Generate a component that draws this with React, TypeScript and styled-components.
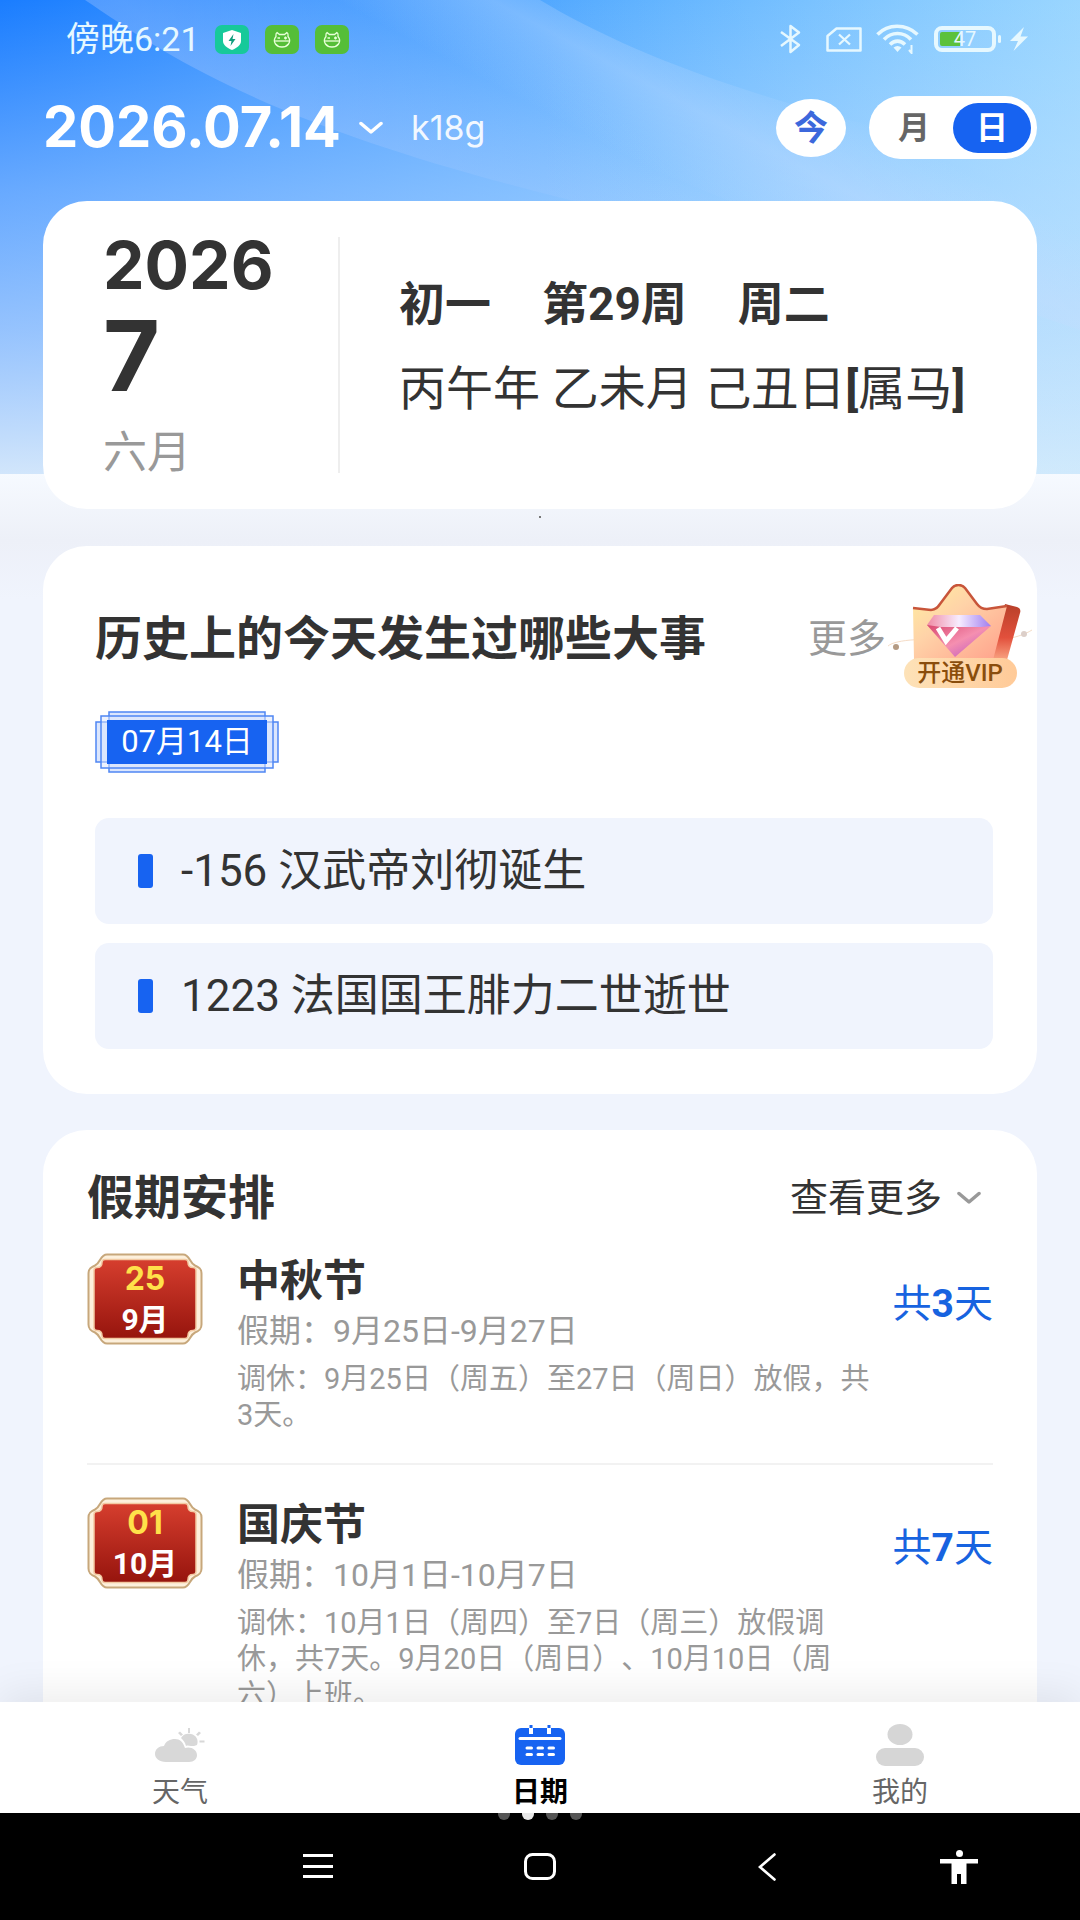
import { useState } from 'react'
import styled, { createGlobalStyle } from 'styled-components'

const EVENTS = ['-156 汉武帝刘彻诞生', '1223 法国国王腓力二世逝世']

const HOLIDAYS = [
  {
    day: '25',
    month: '9月',
    name: '中秋节',
    range: '假期：9月25日-9月27日',
    note: '调休：9月25日（周五）至27日（周日）放假，共3天。',
    total: 3,
  },
  {
    day: '01',
    month: '10月',
    name: '国庆节',
    range: '假期：10月1日-10月7日',
    note: '调休：10月1日（周四）至7日（周三）放假调休，共7天。9月20日（周日）、10月10日（周六）上班。',
    total: 7,
  },
]

const TABS = [
  { id: 'weather', label: '天气', Icon: WeatherIcon },
  { id: 'date', label: '日期', Icon: CalendarIcon },
  { id: 'mine', label: '我的', Icon: UserIcon },
]

export default function App() {
  const [mode, setMode] = useState('day')
  const [tab, setTab] = useState('date')

  return (
    <>
      <GlobalStyle />
      <Screen>
        <Content>
          <Sky />
          <StatusBar />
          <TopBar>
            <DateButton type="button">
              2026.07.14
              <Chevron color="#ffffff" />
            </DateButton>
            <Channel>k18g</Channel>
            <TodayButton type="button">今</TodayButton>
            <Segment>
              <SegmentButton
                type="button"
                $active={mode === 'month'}
                onClick={() => setMode('month')}
              >
                月
              </SegmentButton>
              <SegmentButton
                type="button"
                $active={mode === 'day'}
                onClick={() => setMode('day')}
              >
                日
              </SegmentButton>
            </Segment>
          </TopBar>

          <DayCard>
            <DayLeft>
              <Year>2026</Year>
              <Month>7</Month>
              <LunarMonth>六月</LunarMonth>
            </DayLeft>
            <DayRight>
              <DaySummary>
                <span>初一</span>
                <span>第29周</span>
                <span>周二</span>
              </DaySummary>
              <DayGanzhi>
                丙午年 乙未月 己丑日<b>[</b>属马<b>]</b>
              </DayGanzhi>
            </DayRight>
          </DayCard>
          <PagerDot />

          <HistoryCard>
            <HistoryHeader>
              <Title>历史上的今天发生过哪些大事</Title>
              <MoreLink href="#history">更多</MoreLink>
            </HistoryHeader>
            <VipButton type="button">
              <VipCrown />
              <VipLabel>开通VIP</VipLabel>
            </VipButton>
            <DateTag>
              <DateTagFrame />
              <DateTagText>07月14日</DateTagText>
            </DateTag>
            <EventList>
              {EVENTS.map((event) => (
                <EventItem key={event}>{event}</EventItem>
              ))}
            </EventList>
          </HistoryCard>

          <HolidayCard>
            <HolidayHeader>
              <Title>假期安排</Title>
              <ViewMore type="button">
                查看更多
                <Chevron color="#999999" />
              </ViewMore>
            </HolidayHeader>
            {HOLIDAYS.map((holiday) => (
              <HolidayItem key={holiday.name}>
                <HolidayBadge>
                  <BadgeFrame id={holiday.day} />
                  <BadgeDay>{holiday.day}</BadgeDay>
                  <BadgeMonth>{holiday.month}</BadgeMonth>
                </HolidayBadge>
                <HolidayInfo>
                  <HolidayName>{holiday.name}</HolidayName>
                  <HolidayRange>{holiday.range}</HolidayRange>
                  <HolidayNote>{holiday.note}</HolidayNote>
                </HolidayInfo>
                <HolidayTotal>
                  共<b>{holiday.total}</b>天
                </HolidayTotal>
              </HolidayItem>
            ))}
          </HolidayCard>
        </Content>

        <TabBar>
          {TABS.map(({ id, label, Icon }) => (
            <TabButton
              key={id}
              type="button"
              $active={tab === id}
              onClick={() => setTab(id)}
            >
              <Icon />
              {label}
            </TabButton>
          ))}
        </TabBar>

        <SystemBar>
          <Dots>
            <Dot />
            <Dot $active />
            <Dot />
            <Dot />
          </Dots>
          <SystemButton type="button" aria-label="菜单" $column={2}>
            <svg width="30" height="25" viewBox="0 0 30 25" fill="#fff">
              <path d="M0 0h30v3H0zM0 11h30v3H0zM0 21h30v3H0z" />
            </svg>
          </SystemButton>
          <SystemButton type="button" aria-label="主页" $column={3}>
            <svg width="32" height="27" viewBox="0 0 32 27" fill="none">
              <rect x="1.5" y="1.5" width="29" height="24" rx="7" stroke="#fff" strokeWidth="3" />
            </svg>
          </SystemButton>
          <SystemButton type="button" aria-label="返回" $column={4}>
            <svg width="18" height="28" viewBox="0 0 18 28" fill="none">
              <path d="M16.5 1.5L2 14l14.500 12.500" stroke="#fff" strokeWidth="2.600" strokeLinecap="round" />
            </svg>
          </SystemButton>
          <SystemButton type="button" aria-label="无障碍" $column={5}>
            <svg width="38" height="34" viewBox="0 0 38 34" fill="#fff">
              <circle cx="19.500" cy="3.500" r="3.500" />
              <path d="M0 9h38v4.500H26.500V34h-5.500V24h-4v10h-5.500V13.500H0z" />
            </svg>
          </SystemButton>
        </SystemBar>
      </Screen>
    </>
  )
}

function StatusBar() {
  return (
    <StatusRow>
      <Clock>傍晚6:21</Clock>
      <AppIcons>
        <svg width="34" height="29" viewBox="0 0 34 29">
          <rect width="34" height="29" rx="7" fill="#17c99a" />
          <path d="M17 5l9 3v8c0 4-4 7-9 9-5-2-9-5-9-9V8z" fill="#fff" />
          <path d="M18.500 9l-5 7h3l-1 5 5-7h-3z" fill="#0f9c7c" />
        </svg>
        <CatIcon />
        <CatIcon />
      </AppIcons>
      <SystemIcons>
        <svg width="22" height="30" viewBox="0 0 22 30" fill="none" stroke="#e6f8ff" strokeWidth="2.500">
          <path d="M1 8l18 13-8.500 7V2l8.500 6.500L1 22" strokeLinejoin="round" />
        </svg>
        <svg width="36" height="25" viewBox="0 0 36 25" fill="none" stroke="#e6f8ff">
          <path d="M10.500 1.500h24v22H1.500V9z" strokeWidth="2.500" strokeLinejoin="round" />
          <path d="M13 7.500l11 10M24 7.500l-11 10" strokeWidth="2.300" />
        </svg>
        <svg width="44" height="30" viewBox="0 0 44 30" fill="none" stroke="#e6f8ff" strokeWidth="3.600">
          <path d="M1.500 10.500C12-.5 30-.5 41.500 10.500" />
          <path d="M8 15.500c7.500-8 19.500-8 27 0" />
          <path d="M14 20.500c4.500-4.500 10.500-4.500 15 0" />
          <path d="M17.500 23.500c2.500-2 5.500-2 8 0L21.500 28z" fill="#e6f8ff" stroke="none" />
          <path d="M35.500 21v8l-2.500-3" strokeWidth="2" />
        </svg>
        <Battery>
          <BatteryText>47</BatteryText>
        </Battery>
        <svg width="18" height="24" viewBox="0 0 18 24" fill="#e6f8ff">
          <path d="M14 0L0 14h8L3.500 24 18 9.500h-7.500z" />
        </svg>
      </SystemIcons>
    </StatusRow>
  )
}

function CatIcon() {
  return (
    <svg width="34" height="29" viewBox="0 0 34 29">
      <rect width="34" height="29" rx="7" fill="#55be38" />
      <g fill="none" stroke="#e9ffd9" strokeWidth="1.300">
        <path d="M11 11.500c0-2-.5-3.500 1-4l2.500 2h5l2.500-2c1.500.5 1 2 1 4 2 2.500 2 5.500.5 7.500-3 4-10 4-13 0-1.500-2-1.500-5 .5-7.500z" />
        <path d="M9.500 16h15" />
        <path d="M12.500 13h2.500M19 13h3M20.500 11.500v3" />
      </g>
    </svg>
  )
}

function Sky() {
  return (
    <SkySvg viewBox="0 0 1080 474" preserveAspectRatio="none" aria-hidden="true">
      <defs>
        <linearGradient id="skyBase" x1="0" y1="0" x2="1080" y2="0" gradientUnits="userSpaceOnUse">
          <stop offset="0" stopColor="#1a7dff" />
          <stop offset="0.300" stopColor="#3d97ff" />
          <stop offset="0.600" stopColor="#5cb0ff" />
          <stop offset="1" stopColor="#8acdff" />
        </linearGradient>
        <linearGradient id="skyFade" x1="0" y1="0" x2="0" y2="1">
          <stop offset="0" stopColor="#c5dfff" stopOpacity="0" />
          <stop offset="0.400" stopColor="#c5dfff" stopOpacity="0.450" />
          <stop offset="0.700" stopColor="#cbe1fd" stopOpacity="0.700" />
          <stop offset="1" stopColor="#dbebfb" stopOpacity="0.950" />
        </linearGradient>
        <linearGradient id="skyBeam" x1="260" y1="130" x2="440" y2="-60" gradientUnits="userSpaceOnUse">
          <stop offset="0" stopColor="#b4ceff" stopOpacity="0.320" />
          <stop offset="1" stopColor="#b4ceff" stopOpacity="0" />
        </linearGradient>
        <linearGradient id="skyBeamTwo" x1="670" y1="180" x2="740" y2="50" gradientUnits="userSpaceOnUse">
          <stop offset="0" stopColor="#c4dcff" stopOpacity="0" />
          <stop offset="0.500" stopColor="#c4dcff" stopOpacity="0.350" />
          <stop offset="1" stopColor="#c4dcff" stopOpacity="0" />
        </linearGradient>
        <linearGradient id="skyRight" x1="0" y1="0" x2="1" y2="0">
          <stop offset="0.500" stopColor="#bfeaff" stopOpacity="0" />
          <stop offset="1" stopColor="#bfeaff" stopOpacity="0.300" />
        </linearGradient>
      </defs>
      <rect width="1080" height="474" fill="url(#skyBase)" />
      <rect width="1080" height="474" fill="url(#skyFade)" />
      <rect width="1080" height="474" fill="url(#skyRight)" />
      <path d="M85 0C130 30 160 52 230 86 330 134 450 172 620 212L1080 260V0z" fill="url(#skyBeam)" />
      <path d="M330 0C500 110 700 200 1080 330V170C800 120 640 60 540 0z" fill="url(#skyBeamTwo)" />
    </SkySvg>
  )
}

function Chevron({ color }: { color: string }) {
  return (
    <svg width="24" height="14" viewBox="0 0 24 14" fill="none">
      <path d="M2 2.500l10 8.500L22 2.500" stroke={color} strokeWidth="3.500" strokeLinecap="round" strokeLinejoin="round" />
    </svg>
  )
}

function VipCrown() {
  return (
    <svg width="146" height="78" viewBox="0 0 146 78">
      <defs>
        <linearGradient id="crownFront" x1="0" y1="0" x2="1" y2="1">
          <stop offset="0" stopColor="#fff0a0" />
          <stop offset="0.400" stopColor="#ffd3a8" />
          <stop offset="1" stopColor="#ff9f8a" />
        </linearGradient>
        <linearGradient id="crownSide" x1="0" y1="0" x2="0" y2="1">
          <stop offset="0" stopColor="#b8402a" />
          <stop offset="0.600" stopColor="#e2503c" />
          <stop offset="1" stopColor="#f9a483" />
        </linearGradient>
        <linearGradient id="gem" x1="0" y1="0" x2="1" y2="1">
          <stop offset="0" stopColor="#d9486f" />
          <stop offset="0.500" stopColor="#f58fb0" />
          <stop offset="1" stopColor="#b44ec4" />
        </linearGradient>
        <linearGradient id="gemTop" x1="0" y1="0" x2="1" y2="0">
          <stop offset="0" stopColor="#f08ba4" />
          <stop offset="0.500" stopColor="#f7ecff" />
          <stop offset="1" stopColor="#9f7df0" />
        </linearGradient>
      </defs>
      <path d="M1 62c8-7 40-8 70-5s60-2 74-11" fill="none" stroke="#f5dcc6" strokeWidth="1" />
      <path d="M118 20l12 3c3 1 4 3 3 6l-13 47h-16z" fill="url(#crownSide)" />
      <path d="M26 24l18 2c5 0 7-3 9-6L65 4c3-4 10-4 13 0l12 16c3 4 6 5 10 5l20-3-14 54H27z" fill="url(#crownFront)" />
      <path d="M26 24l18 2c5 0 7-3 9-6L65 4c3-4 10-4 13 0l12 16c3 4 6 5 10 5l20-3" fill="none" stroke="#c8553a" strokeWidth="2.500" />
      <path d="M47 31h46l11 11-10 4H46l-6-5z" fill="url(#gemTop)" />
      <path d="M40 41l14 2h40l10-1-36 31z" fill="url(#gem)" />
      <path d="M51 44l8 13 11-13" fill="none" stroke="#fff" strokeWidth="5" />
      <circle cx="9" cy="63" r="3" fill="#b59b83" />
      <circle cx="137" cy="50" r="3" fill="#dccfc9" />
    </svg>
  )
}

function DateTagFrame() {
  return (
    <FrameSvg viewBox="0 0 184 62" aria-hidden="true">
      <g fill="#dbe6fd" stroke="#4f86f3" strokeWidth="1.500">
        <rect x="1" y="11" width="182" height="40" />
        <rect x="14" y="1" width="156" height="60" />
        <rect x="6" y="5" width="172" height="52" fillOpacity="0.500" />
      </g>
      <rect x="12" y="9" width="160" height="44" fill="#1763f1" />
    </FrameSvg>
  )
}

function BadgeFrame({ id }: { id: string }) {
  return (
    <FrameSvg viewBox="0 0 116 92" aria-hidden="true">
      <defs>
        <linearGradient id={`red${id}`} x1="0" y1="0" x2="0" y2="1">
          <stop offset="0" stopColor="#d63e2e" />
          <stop offset="1" stopColor="#96140d" />
        </linearGradient>
      </defs>
      <path
        d="M20 1.500h76c7 0 6 8 12 11 5 2 6.500 4 6.500 8v51c0 4-1.500 6-6.500 8-6 3-5 11-12 11H20c-7 0-6-8-12-11-5-2-6.500-4-6.500-8v-51c0-4 1.500-6 6.500-8 6-3 5-11 12-11z"
        fill="#fdf0dc"
        stroke="#c7a77b"
        strokeWidth="2"
      />
      <path
        d="M18 6.500h80c2 0 3 1 3 3 0 4 2 5 5 5 2 0 3 1 3 3v57c0 2-1 3-3 3-3 0-5 1-5 5 0 2-1 3-3 3H18c-2 0-3-1-3-3 0-4-2-5-5-5-2 0-3-1-3-3v-57c0-2 1-3 3-3 3 0 5-1 5-5 0-2 1-3 3-3z"
        fill={`url(#red${id})`}
        stroke="#f3c9a2"
        strokeWidth="1.500"
      />
    </FrameSvg>
  )
}

function WeatherIcon() {
  return (
    <svg width="50" height="42" viewBox="0 0 50 42" fill="#d8d8d8">
      <path d="M11 38C4 38 0 34 0 30c0-5 4-8 9-8 2-5 6-7 11-7s8 3 10 9c6-2 12 2 12 7 0 4-3 7-8 7z" />
      <path d="M26 14c2-4 6-5 10-4 5 1 8 6 6 11-2 1-4 1-6 1-2 0-3-1-5 0-1-4-3-6-5-8z" />
      <path d="M33 4h2v5h-2zM23 9l2-1.500 3 3-2 1.500zM44 7.500l2 1.500-3 3-2-1.500zM44.500 16.500h5v2h-5z" />
    </svg>
  )
}

function CalendarIcon() {
  return (
    <svg width="50" height="42" viewBox="0 0 50 42">
      <rect y="4" width="50" height="37" rx="6" fill="#1763f1" />
      <path d="M5 14.500h40" stroke="#fff" strokeWidth="3" strokeLinecap="round" />
      <path d="M16 4v6M34 4v6" stroke="#fff" strokeWidth="4" />
      <path d="M16 1v3M34 1v3" stroke="#1763f1" strokeWidth="3" />
      <path d="M12 24h4.500M23 24h4.500M34 24h4.500M12 30.500h4.500M23 30.500h4.500M34 30.500h4.500" stroke="#fff" strokeWidth="3" strokeLinecap="round" />
    </svg>
  )
}

function UserIcon() {
  return (
    <svg width="48" height="42" viewBox="0 0 48 42" fill="#d6d6d6">
      <ellipse cx="24" cy="10.500" rx="12.500" ry="10.500" />
      <rect y="24" width="48" height="18" rx="9" />
    </svg>
  )
}

const GlobalStyle = createGlobalStyle`
  * {
    box-sizing: border-box;
  }

  body {
    margin: 0;
    background-color: #000;
    font-family: Roboto, 'Noto Sans CJK SC', sans-serif;
    text-spacing-trim: space-all;
  }

  h2, h3, p, ul {
    margin: 0;
    padding: 0;
  }

  svg {
    display: block;
    flex-shrink: 0;
  }

  button {
    padding: 0;
    border: 0;
    background: none;
    font-family: inherit;
    cursor: pointer;
  }
`

const Screen = styled.div`
  display: flex;
  flex-direction: column;
  height: 100vh;
`

const Content = styled.main`
  position: relative;
  flex: 1;
  min-height: 0;
  overflow: hidden;
  background: linear-gradient(#f6faff 474px, #edf0f8 540px, #f0f4fd 600px);
`

const SkySvg = styled.svg`
  position: absolute;
  top: 0;
  left: 0;
  width: 100%;
  height: 474px;
`

const StatusRow = styled.div`
  position: relative;
  display: flex;
  align-items: center;
  height: 78px;
  padding: 0 52px 0 66px;
`

const Clock = styled.span`
  font-size: 34px;
  line-height: 40px;
  color: #e6f8ff;
`

const AppIcons = styled.div`
  display: flex;
  gap: 16px;
  margin-left: 15px;
`

const SystemIcons = styled.div`
  display: flex;
  align-items: center;
  gap: 14px;
  margin-left: auto;

  svg:first-child {
    margin-right: 10px;
  }
`

const Battery = styled.div`
  position: relative;
  display: flex;
  align-items: center;
  justify-content: center;
  width: 62px;
  height: 26px;
  border: 4px solid #e6f8ff;
  border-radius: 8px;
  background: linear-gradient(90deg, #5cc13c 40%, transparent 40%) content-box;
  padding: 2px;

  &::after {
    content: '';
    position: absolute;
    right: -9px;
    width: 3px;
    height: 8px;
    border-radius: 2px;
    background-color: #e6f8ff;
  }
`

const BatteryText = styled.span`
  font-size: 20px;
  line-height: 16px;
  color: #e6f8ff;
`

const TopBar = styled.header`
  position: relative;
  display: flex;
  align-items: center;
  padding: 18px 43px 42px;
`

const DateButton = styled.button`
  display: flex;
  align-items: center;
  gap: 18px;
  font-family: Inter, sans-serif;
  font-size: 56px;
  font-weight: 700;
  line-height: 63px;
  color: #fff;
`

const Channel = styled.span`
  margin-left: 28px;
  font-family: Inter, sans-serif;
  font-size: 34px;
  line-height: 40px;
  color: #f2f8ff;
`

const TodayButton = styled.button`
  width: 70px;
  height: 58px;
  margin-left: auto;
  border-radius: 50%;
  background-color: #fff;
  font-size: 34px;
  font-weight: 700;
  line-height: 58px;
  color: #3c68dc;
`

const Segment = styled.div`
  display: flex;
  align-items: center;
  height: 63px;
  margin-left: 23px;
  padding: 0 6px;
  border-radius: 32px;
  background-color: #fff;
`

const SegmentButton = styled.button<{ $active: boolean }>`
  width: 78px;
  height: 50px;
  border-radius: 25px;
  background-color: ${(props) => (props.$active ? '#1763f1' : 'transparent')};
  font-size: 32px;
  font-weight: 700;
  line-height: 50px;
  color: ${(props) => (props.$active ? '#fff' : '#666')};
`

const Card = styled.section`
  position: relative;
  margin: 0 43px;
  border-radius: 44px;
  background-color: #fff;
`

const DayCard = styled(Card)`
  display: flex;
  padding: 36px 60px;
`

const DayLeft = styled.div`
  display: flex;
  flex-direction: column;
  width: 237px;
  height: 236px;
  border-right: 2px solid #eee;
  color: #333;
`

const Year = styled.span`
  font-family: Inter, sans-serif;
  font-size: 66px;
  font-weight: 700;
  line-height: 56px;
`

const Month = styled.span`
  font-family: Inter, sans-serif;
  font-size: 98px;
  font-weight: 700;
  line-height: 126px;
`

const LunarMonth = styled.span`
  margin-top: 14px;
  font-size: 44px;
  line-height: 40px;
  color: #999;
`

const DayRight = styled.div`
  padding: 37px 0 0 59px;
  color: #333;
`

const DaySummary = styled.p`
  display: flex;
  gap: 51px;
  font-size: 46px;
  font-weight: 700;
  line-height: 60px;
`

const DayGanzhi = styled.p`
  margin-top: 25px;
  font-size: 47px;
  line-height: 60px;
  white-space: nowrap;
`

const PagerDot = styled.div`
  width: 2px;
  height: 2px;
  margin: 7px auto 28px;
  background-color: #777;
`

const HistoryCard = styled(Card)`
  padding: 61px 44px 45px 52px;
`

const HistoryHeader = styled.div`
  display: flex;
  align-items: center;
  justify-content: space-between;
  padding-right: 107px;
`

const Title = styled.h2`
  font-size: 47px;
  font-weight: 700;
  line-height: 64px;
  color: #333;
`

const MoreLink = styled.a`
  font-size: 39px;
  line-height: 64px;
  color: #999;
  text-decoration: none;
`

const VipButton = styled.button`
  position: absolute;
  top: 38px;
  right: 4px;
  display: flex;
  flex-direction: column;
  align-items: center;
`

const VipLabel = styled.span`
  width: 113px;
  height: 30px;
  margin-top: -4px;
  border-radius: 15px;
  background: linear-gradient(90deg, #fde2b8, #ffca98);
  font-size: 24px;
  font-weight: 500;
  line-height: 30px;
  color: #8a4d0c;
  z-index: 1;
`

const DateTag = styled.div`
  position: relative;
  width: 184px;
  height: 62px;
  margin-top: 40px;
`

const FrameSvg = styled.svg`
  position: absolute;
  inset: 0;
  width: 100%;
  height: 100%;
`

const DateTagText = styled.p`
  position: relative;
  font-size: 31px;
  line-height: 62px;
  text-align: center;
  color: #fff;
`

const EventList = styled.ul`
  display: flex;
  flex-direction: column;
  gap: 19px;
  margin-top: 45px;
  list-style: none;
`

const EventItem = styled.li`
  display: flex;
  align-items: center;
  gap: 28px;
  height: 106px;
  padding: 0 43px;
  border-radius: 14px;
  background-color: #f0f4fd;
  font-size: 44px;
  line-height: 64px;
  color: #333;

  &::before {
    content: '';
    width: 15px;
    height: 34px;
    border-radius: 3px;
    background-color: #1763f1;
  }
`

const HolidayCard = styled(Card)`
  margin-top: 36px;
  padding: 36px 44px 0;
`

const HolidayHeader = styled.div`
  display: flex;
  align-items: center;
  justify-content: space-between;
  padding-right: 12px;
`

const ViewMore = styled.button`
  display: flex;
  align-items: center;
  gap: 15px;
  font-size: 38px;
  line-height: 64px;
  color: #333;
`

const HolidayItem = styled.article`
  display: grid;
  grid-template-columns: 116px 1fr auto;
  align-items: start;
  padding: 32px 0 30px;
  border-bottom: 2px solid #f2f2f2;

  ${HolidayHeader} + & {
    padding-top: 23px;
  }

  &:last-child {
    border-bottom: 0;
  }
`

const HolidayBadge = styled.div`
  position: relative;
  display: flex;
  flex-direction: column;
  align-items: center;
  height: 92px;
  padding-top: 6px;
  font-weight: 700;
`

const BadgeDay = styled.span`
  position: relative;
  font-family: Inter, sans-serif;
  font-size: 32px;
  line-height: 40px;
  color: #ffe14a;
`

const BadgeMonth = styled.span`
  position: relative;
  font-size: 30px;
  line-height: 42px;
  color: #fff;
`

const HolidayInfo = styled.div`
  padding: 2px 0 0 34px;
`

const HolidayName = styled.h3`
  font-size: 43px;
  font-weight: 700;
  line-height: 52px;
  color: #333;
`

const HolidayRange = styled.p`
  margin-top: 3px;
  font-size: 32px;
  line-height: 42px;
  color: #999;
`

const HolidayNote = styled.p`
  margin-top: 9px;
  font-size: 29px;
  line-height: 36px;
  color: #999;
`

const HolidayTotal = styled.span`
  margin: 28px 0 0 12px;
  font-size: 39px;
  line-height: 46px;
  color: #1763e0;
`

const TabBar = styled.nav`
  position: relative;
  display: grid;
  grid-template-columns: repeat(3, 1fr);
  height: 111px;
  background-color: #fff;
  box-shadow: 0 -8px 40px rgba(0, 0, 0, 0.08);
`

const TabButton = styled.button<{ $active: boolean }>`
  display: flex;
  flex-direction: column;
  align-items: center;
  padding-top: 22px;
  font-size: 28px;
  font-weight: ${(props) => (props.$active ? 700 : 400)};
  line-height: 40px;
  color: ${(props) => (props.$active ? '#000' : '#666')};

  svg {
    margin-bottom: 7px;
  }
`

const SystemBar = styled.div`
  position: relative;
  display: grid;
  grid-template-columns: 206fr 223fr 222fr 232fr 152fr 45fr;
  align-items: center;
  height: 107px;
  background-color: #000;
`

const Dots = styled.div`
  position: absolute;
  top: 0;
  left: 50%;
  display: flex;
  gap: 12px;
  height: 7px;
  overflow: hidden;
  transform: translateX(-50%);
`

const Dot = styled.span<{ $active?: boolean }>`
  width: 12px;
  height: 12px;
  margin-top: -5px;
  border-radius: 50%;
  background-color: ${(props) => (props.$active ? '#e8e8e8' : '#555')};
`

const SystemButton = styled.button<{ $column: number }>`
  grid-column: ${(props) => props.$column};
  display: flex;
  align-items: center;
  justify-content: center;
  height: 100%;
`
